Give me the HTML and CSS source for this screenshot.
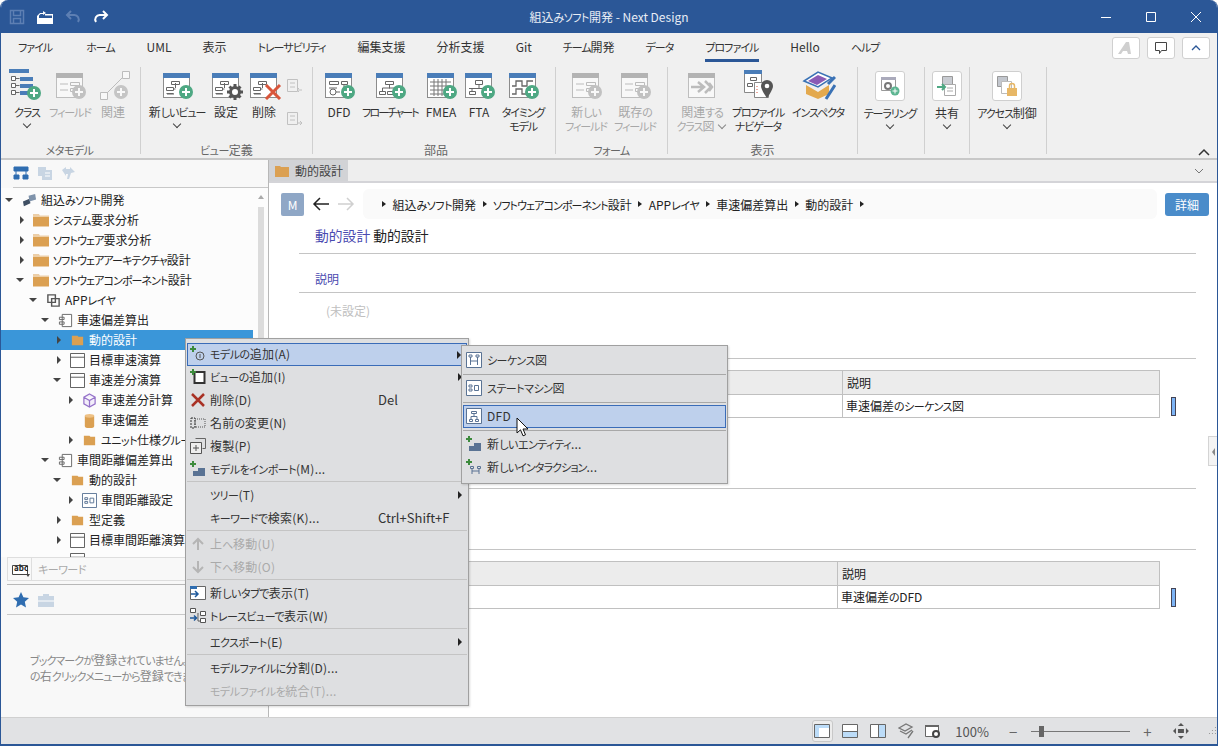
FILE: index.html
```html
<!DOCTYPE html>
<html lang="ja">
<head>
  <meta charset="UTF-8">
  <title>組込みソフト開発 - Next Design</title>
  <link rel="stylesheet" href="styles.css">
</head>
<body>
<svg class="defs" width="0" height="0">
  <defs>
    <g id="win"><rect x="4.5" y="5.5" width="26" height="24" fill="#fff" stroke="#8c8c8c"/><rect x="4" y="5" width="27" height="5" fill="#4a7db8"/></g>
    <g id="plus"><circle cx="27" cy="24" r="7" fill="#4ea883"/><path d="M27 20v8M23 24h8" stroke="#fff" stroke-width="2"/></g>
    <g id="tree"><path d="M12.5 13.5h8v3h-8zM7.5 19.500h7v3h-7zM7.500 25.500h7v-0M16.500 15v5M14.500 21h2M8 26h7" fill="none" stroke="#666"/></g>
    <g id="field"><path d="M8 16h8M8 22h8M18.500 14.500h9v3h-9zM18.500 20.500h9v3h-9z" fill="none" stroke="#888"/></g>
    <g id="dfd"><path d="M8.500 13.500h9v3h-9zM20.500 13.500h6v3h-6zM8 20h8" fill="none" stroke="#666"/><circle cx="12" cy="24" r="3" fill="#fff" stroke="#666"/><path d="M15 24h4M23 16v4" stroke="#666"/></g>
    <g id="flow"><path d="M13.500 13.500h8v3h-8zM7.500 23.500h6v3h-6zM15.500 23.500h6v3h-6zM17.500 16.500v4M10.500 23v-3h14v3" fill="none" stroke="#666"/></g>
    <g id="grid"><path d="M7 14h21M7 18h21M7 22h21M7 26h21M11 11v17M15 11v17M19 11v17M23 11v17" stroke="#777"/></g>
    <g id="fta"><path d="M14.500 12.500h7v4h-7zM8.500 23.500h6v3h-6zM18 16.500v4M8 20.500h14M11 20.500v3" fill="none" stroke="#666"/></g>
    <g id="wave"><path d="M7 18h4v-5h6v5h5v-5h6M7 26h4v-5h6v5h5v-5h6" fill="none" stroke="#666" stroke-width="1.300"/></g>
    <g id="gear"><circle cx="27" cy="24" r="4.500" fill="none" stroke="#555" stroke-width="3"/><path d="M27 16v3M27 29v3M19 24h3M32 24h3M21.500 18.500l2 2M30.500 27.500l2 2M32.500 18.500l-2 2M21.500 29.500l2-2" stroke="#555" stroke-width="3"/></g>
    <g id="cross"><path d="M20 17l14 14M34 17L20 31" stroke="#d9553a" stroke-width="3"/></g>
    <g id="fold-big"><path d="M0 1h6l1 1h9v11H0z" fill="#dba052"/><path d="M0 2.500h16" stroke="#fff"/></g>
    <g id="fold"><path d="M2 2h6l1 1h5v9H2z" fill="#dba052"/></g>
    <g id="block"><path d="M.5.500h15v15H.500zM.5 4.500h15" fill="#fff" stroke="#555"/></g>
    <g id="comp"><path d="M4.500 1.500h10v13h-10zM1.500 4.500h5v2.500h-5zM1.500 9.500h5v2.500h-5z" fill="#fff" stroke="#666"/></g>
    <g id="state"><path d="M.5.500h15v15H.500z" fill="#fff" stroke="#5a7394"/><path d="M3 5h3v2H3zM3 9h3v2H3zM8.500 5.500h4v5h-4z" fill="none" stroke="#5a7394"/></g>
    <g id="addent"><path d="M3 0v6M0 3h6" stroke="#3c8a3c" stroke-width="2"/><path d="M3 10h5V7h7v8H3z" fill="#5a7394"/></g>
  </defs>
</svg>

<div class="window">
  <header class="titlebar">
    <div class="qat">
      <svg class="qat-ic" viewBox="0 0 16 16"><path d="M1.500 1.500h13v13h-13zM4.500 1.500v5h7v-5M4.500 14.500v-5h7v5" fill="none" stroke="#5d7fb3" stroke-width="1.500"/></svg>
      <svg class="qat-ic" viewBox="0 0 16 16"><path d="M1 6l2-2h3v-2l3 2-3 2V5H3.500L2 6.500V14h13V6.500H8V5h8v10H0V7z" fill="#fff"/><path d="M1 9h14v6H1z" fill="#fff"/></svg>
      <svg class="qat-ic" viewBox="0 0 16 16"><path d="M6 2L2 6l4 4M2 6h7a4.500 4.500 0 0 1 4 7" fill="none" stroke="#5d7fb3" stroke-width="2"/></svg>
      <svg class="qat-ic" viewBox="0 0 16 16"><path d="M10 2l4 4-4 4M14 6H7a4.500 4.500 0 0 0-4 7" fill="none" stroke="#fff" stroke-width="2"/></svg>
    </div>
    <div class="title">組込<span class="k">みソフト</span>開発 - Next Design</div>
    <div class="winctl">
      <svg class="wc" viewBox="0 0 12 12"><path d="M1 6.500h10" stroke="#fff"/></svg>
      <svg class="wc" viewBox="0 0 12 12"><path d="M1.500 1.500h9v9h-9z" fill="none" stroke="#fff"/></svg>
      <svg class="wc" viewBox="0 0 12 12"><path d="M1 1l10 10M11 1L1 11" stroke="#fff"/></svg>
    </div>
  </header>

  <nav class="tabs">
    <span class="tab k">ファイル</span><span class="tab k">ホーム</span><span class="tab">UML</span><span class="tab">表示</span><span class="tab k">トレーサビリティ</span><span class="tab">編集支援</span><span class="tab">分析支援</span><span class="tab">Git</span><span class="tab"><span class="k">チーム</span>開発</span><span class="tab k">データ</span><span class="tab k active">プロファイル</span><span class="tab">Hello</span><span class="tab k">ヘルプ</span>
    <div class="tab-tools">
      <span class="tool"><svg width="18" height="14" viewBox="0 0 18 14"><path d="M1 13L9 1h3l2 12h-3l-1-3H6l-2 3z" fill="#cfcfcf"/></svg></span>
      <span class="tool"><svg width="14" height="14" viewBox="0 0 14 14"><path d="M1.500 1.500h11v8h-5l-2 3v-3h-4z" fill="none" stroke="#444"/></svg></span>
      <span class="tool"><svg width="12" height="8" viewBox="0 0 12 8"><path d="M2 6l4-4 4 4" fill="none" stroke="#2b5797" stroke-width="1.300"/></svg></span>
    </div>
  </nav>

  <section class="ribbon">
    <div class="group g1">
      <div class="btns">
        <div class="rb w44"><svg class="ri" viewBox="0 0 36 32"><path d="M0 1h20v4H0z" fill="#4a7db8"/><path d="M2.500 8.500h4v4h-4zM2.500 15.500h4v4h-4zM2.500 22.500h4v4h-4zM6.500 10.500h4M6.500 17.500h4M6.500 24.500h4" fill="#fff" stroke="#666"/><path d="M11 9h13v4H11zM11 16h13v4H11zM11 23h9v4h-9z" fill="#4a7db8"/><use href="#plus" transform="translate(-2 1)"/></svg><div class="lb k">クラス</div><div class="chev"></div></div>
        <div class="rb w42 off"><svg class="ri" viewBox="0 0 36 32"><use href="#win"/><use href="#field"/><use href="#plus"/></svg><div class="lb k">フィールド</div></div>
        <div class="rb w44 off"><svg class="ri" viewBox="0 0 36 32"><path d="M5.500 24.500h7v7h-7zM27.500 3.500h7v7h-7zM12 25L28 9" fill="#fff" stroke="#888"/><circle cx="26" cy="24" r="7" fill="#999"/><path d="M26 20v8M22 24h8" stroke="#fff" stroke-width="2"/></svg><div class="lb">関連</div></div>
      </div>
      <div class="gl k">メタモデル</div>
    </div>
    <div class="group g2">
      <div class="btns">
        <div class="rb w60"><svg class="ri" viewBox="0 0 36 32"><use href="#win"/><use href="#tree"/><use href="#plus"/></svg><div class="lb">新<span class="k">しいビュー</span></div><div class="chev"></div></div>
        <div class="rb w38"><svg class="ri" viewBox="0 0 36 32"><use href="#win"/><use href="#tree"/><use href="#gear"/></svg><div class="lb">設定</div></div>
        <div class="rb w38"><svg class="ri" viewBox="0 0 36 32"><use href="#win"/><use href="#tree"/><use href="#cross"/></svg><div class="lb">削除</div></div>
        <div class="small-col">
          <svg class="off" width="18" height="18" viewBox="0 0 18 18"><path d="M2.500 2.500h10v12h-10zM5 6h5M5 10h5M12 13H17M12 13l2-2M12 13l2 2" fill="none" stroke="#888"/></svg>
          <svg class="off" width="18" height="18" viewBox="0 0 18 18"><path d="M2.500 2.500h10v12h-10zM5 6h5M5 10h5M12 13H17M17 13l-2-2M17 13l-2 2" fill="none" stroke="#888"/></svg>
        </div>
      </div>
      <div class="gl"><span class="k">ビュー</span>定義</div>
    </div>
    <div class="group g3">
      <div class="btns">
        <div class="rb w32"><svg class="ri" viewBox="0 0 36 32"><use href="#win"/><use href="#dfd"/><use href="#plus"/></svg><div class="lb">DFD</div></div>
        <div class="rb w70"><svg class="ri" viewBox="0 0 36 32"><use href="#win"/><use href="#flow"/><use href="#plus"/></svg><div class="lb k nr">フローチャート</div></div>
        <div class="rb w32"><svg class="ri" viewBox="0 0 36 32"><use href="#win"/><use href="#grid"/><use href="#plus"/></svg><div class="lb">FMEA</div></div>
        <div class="rb w44"><svg class="ri" viewBox="0 0 36 32"><use href="#win"/><use href="#fta"/><use href="#plus"/></svg><div class="lb">FTA</div></div>
        <div class="rb w44"><svg class="ri" viewBox="0 0 36 32"><use href="#win"/><use href="#wave"/><use href="#plus"/></svg><div class="lb k">タイミング<br>モデル</div></div>
      </div>
      <div class="gl">部品</div>
    </div>
    <div class="group g4">
      <div class="btns">
        <div class="rb w48 off"><svg class="ri" viewBox="0 0 36 32"><use href="#win"/><use href="#field"/><use href="#plus"/></svg><div class="lb">新<span class="k">しい<br>フィールド</span></div></div>
        <div class="rb w50 off"><svg class="ri" viewBox="0 0 36 32"><use href="#win"/><use href="#field"/><use href="#plus"/></svg><div class="lb">既存<span class="k">の<br>フィールド</span></div></div>
      </div>
      <div class="gl k">フォーム</div>
    </div>
    <div class="group g5">
      <div class="btns">
        <div class="rb w56 off"><svg class="ri" viewBox="0 0 36 32"><use href="#win"/><path d="M7 19h12M14 14l6 5-6 5M21 13l6 6-6 6M25 15l3 4-3 4" fill="none" stroke="#888" stroke-width="2.500"/></svg><div class="lb">関連<span class="k">する<br>クラス</span>図<i class="chev-in"></i></div></div>
        <div class="rb w56"><svg class="ri" viewBox="0 0 36 32"><path d="M4.500 2.500h17v22h-17z" fill="#fff" stroke="#888"/><path d="M4 2h18v4H4z" fill="#4a7db8"/><path d="M10.500 9.500h6v3h-6zM7.500 15.500h5v3h-5z" fill="none" stroke="#666"/><path d="M14.500 14.500h14v15h-14z" fill="#fff" stroke="#888"/><path d="M17 18v9" stroke="#d9553a" stroke-dasharray="1 2"/><path d="M27 12a6 6 0 0 1 6 6c0 4-6 12-6 12s-6-8-6-12a6 6 0 0 1 6-6z" fill="#555"/><circle cx="27" cy="18" r="2.300" fill="#fff"/></svg><div class="lb k">プロファイル<br>ナビゲータ</div></div>
        <div class="rb w64"><svg class="ri" viewBox="0 0 36 32"><path d="M4 13L18 4l14 6-14 9z" fill="#fff" stroke="#3a72b5" stroke-width="1.500"/><path d="M8 13l10-6 9 4-10 6z" fill="#8a5bb5"/><path d="M6 17l12 7 11-7v9l-11 5-12-5z" fill="#e3a94e"/><path d="M28 16L35 9M26 31l9-14" stroke="#3a72b5" stroke-width="3"/></svg><div class="lb k">インスペクタ</div></div>
      </div>
      <div class="gl">表示</div>
    </div>
    <div class="group g6">
      <div class="btns">
        <div class="rb w62"><div class="boxed"><svg width="22" height="22" viewBox="0 0 22 22"><path d="M2.500 2.500h14v13h-14z" fill="#fff" stroke="#999"/><path d="M2 2h15v3H2z" fill="#aab"/><circle cx="9" cy="11" r="3" fill="none" stroke="#777" stroke-width="2"/><circle cx="16" cy="16" r="4.500" fill="#5cb591"/><path d="M16 13.500v5M13.500 16h5" stroke="#fff"/></svg></div><div class="lb k">テーラリング</div><div class="chev"></div></div>
      </div>
    </div>
    <div class="group g7">
      <div class="btns">
        <div class="rb w40"><div class="boxed"><svg width="22" height="22" viewBox="0 0 22 22"><path d="M6.500 1.500h10v9h-10z" fill="#c9ccd2" stroke="#999"/><path d="M8.500 9.500h11v11h-11zM11 13h6M11 16h6" fill="#fff" stroke="#aaa"/><path d="M1 12h8M6 9l3 3-3 3" fill="none" stroke="#4ea883" stroke-width="2"/></svg></div><div class="lb">共有</div><div class="chev"></div></div>
      </div>
    </div>
    <div class="group g8">
      <div class="btns">
        <div class="rb w72"><div class="boxed"><svg width="22" height="22" viewBox="0 0 22 22"><path d="M1.500 1.500h10v10h-10z" fill="#c3c7ce" stroke="#999"/><path d="M5.500 6.500h10v12h-10z" fill="#fff" stroke="#bbb"/><path d="M11 13h10v8H11z" fill="#e7b766"/><path d="M13.500 13v-2a2.500 2.500 0 0 1 5 0v2" fill="none" stroke="#e7b766" stroke-width="1.500"/></svg></div><div class="lb"><span class="k">アクセス</span>制御</div><div class="chev"></div></div>
      </div>
    </div>
    <svg class="rb-collapse" width="12" height="8" viewBox="0 0 12 8"><path d="M1 7l5-5 5 5" fill="none" stroke="#333" stroke-width="1.500"/></svg>
  </section>

  <main class="main">
    <aside class="side">
      <div class="side-tools">
        <svg width="16" height="14" viewBox="0 0 16 14"><path d="M1 1h14v4H1zM1 9h5v4H1zM10 9h5v4h-5zM3 5v4M13 5v4" fill="#2f6db0" stroke="#2f6db0"/></svg>
        <svg width="16" height="14" viewBox="0 0 16 14"><path d="M1 1h8v9H1zM5 4h10v10H5z" fill="#c8d5e3"/><path d="M8 7h5M8 10h5" stroke="#fff"/></svg>
        <svg width="16" height="14" viewBox="0 0 16 14"><path d="M1 4l4-3v2h4V1l5 5-4 1-2 6H6l1-5H5v2z" fill="#c8d5e3"/></svg>
      </div>
      <div class="tree-wrap">
        <div class="tree">
          <div class="row l0"><i class="tw down"></i><svg class="ti" viewBox="0 0 16 16"><path d="M1 9l7-3 1 5-7 3z" fill="#3f4f63"/><path d="M7 3l7-2 1 6-7 2z" fill="#7f93ab"/></svg><span>組込<span class="k">みソフト</span>開発</span></div>
          <div class="row l1"><i class="tw right"></i><svg class="ti big" viewBox="0 0 16 14"><use href="#fold-big"/></svg><span><span class="k">システム</span>要求分析</span></div>
          <div class="row l1"><i class="tw right"></i><svg class="ti big" viewBox="0 0 16 14"><use href="#fold-big"/></svg><span><span class="k t">ソフトウェア</span>要求分析</span></div>
          <div class="row l1"><i class="tw right"></i><svg class="ti big" viewBox="0 0 16 14"><use href="#fold-big"/></svg><span><span class="k t">ソフトウェアアーキテクチャ</span>設計</span></div>
          <div class="row l1"><i class="tw down"></i><svg class="ti big" viewBox="0 0 16 14"><use href="#fold-big"/></svg><span><span class="k t">ソフトウェアコンポーネント</span>設計</span></div>
          <div class="row l2"><i class="tw down"></i><svg class="ti" viewBox="0 0 16 16"><path d="M2 2h8v8H2z M6 6h8v8H6z" fill="none" stroke="#555" stroke-width="1.500"/></svg><span>APP<span class="k">レイヤ</span></span></div>
          <div class="row l3"><i class="tw down"></i><svg class="ti" viewBox="0 0 16 16"><use href="#comp"/></svg><span>車速偏差算出</span></div>
          <div class="row l4 sel"><i class="tw right"></i><svg class="ti" viewBox="0 0 16 14"><use href="#fold"/></svg><span>動的設計</span></div>
          <div class="row l4"><i class="tw right"></i><svg class="ti" viewBox="0 0 16 16"><use href="#block"/></svg><span>目標車速演算</span></div>
          <div class="row l4"><i class="tw down"></i><svg class="ti" viewBox="0 0 16 16"><use href="#block"/></svg><span>車速差分演算</span></div>
          <div class="row l5"><i class="tw right"></i><svg class="ti" viewBox="0 0 16 16"><path d="M8 1l6 3.500v7L8 15l-6-3.500v-7zM2 4.500L8 8l6-3.500M8 8v7" fill="#f3eefa" stroke="#9572c9" stroke-width="1.300"/></svg><span>車速差分計算</span></div>
          <div class="row l5"><i class="tw"></i><svg class="ti" viewBox="0 0 16 16"><path d="M3 3h10v11H3z" fill="#dba052"/><ellipse cx="8" cy="3" rx="5" ry="2" fill="#eec185"/><ellipse cx="8" cy="14" rx="5" ry="2" fill="#dba052"/></svg><span>車速偏差</span></div>
          <div class="row l5"><i class="tw right"></i><svg class="ti" viewBox="0 0 16 14"><use href="#fold"/></svg><span><span class="k">ユニット</span>仕様<span class="k">グループ</span></span></div>
          <div class="row l3"><i class="tw down"></i><svg class="ti" viewBox="0 0 16 16"><use href="#comp"/></svg><span>車間距離偏差算出</span></div>
          <div class="row l4"><i class="tw down"></i><svg class="ti" viewBox="0 0 16 14"><use href="#fold"/></svg><span>動的設計</span></div>
          <div class="row l5"><i class="tw right"></i><svg class="ti" viewBox="0 0 16 16"><use href="#state"/></svg><span>車間距離設定</span></div>
          <div class="row l4"><i class="tw right"></i><svg class="ti" viewBox="0 0 16 14"><use href="#fold"/></svg><span>型定義</span></div>
          <div class="row l4"><i class="tw right"></i><svg class="ti" viewBox="0 0 16 16"><use href="#block"/></svg><span>目標車間距離演算</span></div>
          <div class="row l4"><i class="tw"></i><svg class="ti" viewBox="0 0 16 16"><use href="#block"/></svg></div>
        </div>
        <div class="vscroll"><i class="vup"></i><div class="vthumb"></div></div>
      </div>
      <div class="search">
        <span class="search-ic"><svg width="18" height="12" viewBox="0 0 18 12"><path d="M.5.500h15v9H.500z" fill="#fff" stroke="#444"/><path d="M14 9h4l-2 3z" fill="#444"/></svg><b>abc</b></span>
        <span class="search-ph k">キーワード</span>
      </div>
      <div class="bm-tools">
        <svg width="16" height="16" viewBox="0 0 16 16"><path d="M8 0l2.400 5.300 5.600.6-4.200 3.800 1.200 5.800L8 12.600 3 15.500l1.200-5.800L0 5.900l5.600-.6z" fill="#2f6db0"/></svg>
        <svg width="16" height="14" viewBox="0 0 16 14"><path d="M5 3V1h6v2h5v11H0V3z" fill="#c8d5e3"/><path d="M0 8h16" stroke="#fff"/></svg>
      </div>
      <div class="bm-empty"><span class="k t">ブックマークが</span>登録<span class="k t">されていません。ツリー</span><br><span class="k t">の</span>右<span class="k t">クリックメニューから</span>登録<span class="k t">できます。</span></div>
    </aside>

    <section class="content">
      <div class="doc-tabs">
        <div class="doc-tab"><svg width="14" height="12" viewBox="0 0 14 12"><path d="M0 1h5l1 1h8v10H0z" fill="#dba052"/></svg>動的設計</div>
        <svg class="doc-chev" width="10" height="6" viewBox="0 0 10 6"><path d="M1 1l4 4 4-4" fill="none" stroke="#777"/></svg>
      </div>
      <div class="nav">
        <span class="m-badge">M</span>
        <svg class="arrow" width="18" height="14" viewBox="0 0 18 14"><path d="M17 7H2M8 1L2 7l6 6" fill="none" stroke="#222" stroke-width="1.500"/></svg>
        <svg class="arrow" width="18" height="14" viewBox="0 0 18 14"><path d="M1 7h15M10 1l6 6-6 6" fill="none" stroke="#d0d0d0" stroke-width="1.500"/></svg>
        <div class="crumbs">
          <i class="cr"></i><span>組込<span class="k">みソフト</span>開発</span><i class="cr"></i><span><span class="k t">ソフトウェアコンポーネント</span>設計</span><i class="cr"></i><span>APP<span class="k">レイヤ</span></span><i class="cr"></i><span>車速偏差算出</span><i class="cr"></i><span>動的設計</span><i class="cr"></i>
        </div>
        <span class="detail-btn">詳細</span>
      </div>
      <div class="sec sec-title"><span class="kw">動的設計</span> 動的設計</div>
      <div class="sec sec-label"><span class="kw">説明</span></div>
      <div class="sec sec-desc">(未設定)</div>
      <div class="sec sec-t1">
        <div class="tbl-row">
          <table class="tbl t1">
            <tr><th class="c1">名前</th><th>説明</th></tr>
            <tr><td class="k">シーケンス図</td><td>車速偏差<span class="k">のシーケンス</span>図</td></tr>
          </table>
          <i class="mark"></i>
        </div>
      </div>
      <div class="sec sec-gap"></div>
      <div class="sec-t2">
        <div class="tbl-row">
          <table class="tbl t2">
            <tr><th class="c2">名前</th><th>説明</th></tr>
            <tr><td>DFD</td><td>車速偏差<span class="k">の</span>DFD</td></tr>
          </table>
          <i class="mark"></i>
        </div>
      </div>
      <div class="handle"><i></i></div>
    </section>
  </main>

  <footer class="status">
    <span class="st active"><svg width="16" height="14" viewBox="0 0 16 14"><path d="M.5.500h15v13H.500z" fill="#fff" stroke="#666"/><path d="M1 1h14v3H1zM1 4h4v9H1z" fill="#bcdcf8"/></svg></span>
    <span class="st"><svg width="16" height="14" viewBox="0 0 16 14"><path d="M.5.500h15v13H.500zM.5 7.500h15" fill="#fff" stroke="#666"/><path d="M1 8h14v5H1z" fill="#bcdcf8"/></svg></span>
    <span class="st"><svg width="16" height="14" viewBox="0 0 16 14"><path d="M.5.500h15v13H.500zM8.500.500v13" fill="#fff" stroke="#666"/><path d="M9 1h6v12H9z" fill="#bcdcf8"/></svg></span>
    <span class="st"><svg width="16" height="16" viewBox="0 0 16 16"><path d="M1 5l7-4 6 3-7 4zM2 8l6 3 6-4M10 15l5-7" fill="none" stroke="#777" stroke-width="1.300"/></svg></span>
    <span class="st"><svg width="16" height="14" viewBox="0 0 16 14"><path d="M.5 1.500h13v11H.500z" fill="#fff" stroke="#666"/><path d="M0 1h14v2H0z" fill="#666"/><circle cx="11" cy="10" r="3" fill="#fff" stroke="#444" stroke-width="2"/></svg></span>
    <span class="zoom">100%</span>
    <span class="zm">−</span>
    <div class="slider"><i></i></div>
    <span class="zm plus">+</span>
    <svg class="fit" width="16" height="16" viewBox="0 0 16 16"><path d="M8 0l3 3H5zM8 16l-3-3h6zM0 8l3-3v6zM16 8l-3 3V5zM5 6h6v4H5z" fill="#555"/></svg>
    <svg class="grip" width="10" height="10" viewBox="0 0 10 10"><path d="M8 1h1v1H8zM5 4h1v1H5zM8 4h1v1H8zM2 7h1v1H2zM5 7h1v1H5zM8 7h1v1H8z" fill="#999"/></svg>
  </footer>

  <div class="menu ctx">
    <div class="mi hi"><svg class="mic" viewBox="0 0 16 16"><path d="M3 0v6M0 3h6" stroke="#3c8a3c" stroke-width="2"/><circle cx="10" cy="10" r="4" fill="none" stroke="#555"/><path d="M10 8v4" stroke="#555"/></svg><span class="k">モデルの</span>追加(A)<i class="sub"></i></div>
    <div class="mi"><svg class="mic" viewBox="0 0 16 16"><path d="M4.500 3h10v11h-10z" fill="#fff" stroke="#333" stroke-width="2"/><path d="M3 0v6M0 3h6" stroke="#3c8a3c" stroke-width="2"/></svg><span class="k">ビューの</span>追加(I)<i class="sub"></i></div>
    <div class="mi"><svg class="mic" viewBox="0 0 16 16"><path d="M2 2l12 12M14 2L2 14" stroke="#a93226" stroke-width="2.500"/></svg>削除(D)<span class="key">Del</span></div>
    <div class="mi"><svg class="mic" viewBox="0 0 16 16"><path d="M1 3h4v10H1z" fill="none" stroke="#333" stroke-dasharray="2 1"/><path d="M5 4h10v8H5z" fill="none" stroke="#555" stroke-dasharray="1 1"/></svg>名前<span class="k">の</span>変更(N)</div>
    <div class="mi"><svg class="mic" viewBox="0 0 16 16"><path d="M5.500.500h10v10h-3" fill="none" stroke="#666"/><path d="M.5 4.500h11v11H.500zM6 7v6M3 10h6" fill="#eee" stroke="#555"/></svg>複製(P)</div>
    <div class="mi"><svg class="mic" viewBox="0 0 16 16"><use href="#addent"/></svg><span class="k">モデルをインポート</span>(M)...</div>
    <div class="msep"></div>
    <div class="mi"><span class="k">ツリー</span>(T)<i class="sub"></i></div>
    <div class="mi"><span class="k">キーワードで</span>検索(K)...<span class="key">Ctrl+Shift+F</span></div>
    <div class="msep"></div>
    <div class="mi dis"><svg class="mic" viewBox="0 0 16 16"><path d="M8 14V3M3 8l5-5 5 5" fill="none" stroke="#b5b5b5" stroke-width="2"/></svg>上<span class="k">へ</span>移動(U)</div>
    <div class="mi dis"><svg class="mic" viewBox="0 0 16 16"><path d="M8 2v11M3 8l5 5 5-5" fill="none" stroke="#b5b5b5" stroke-width="2"/></svg>下<span class="k">へ</span>移動(O)</div>
    <div class="msep"></div>
    <div class="mi"><svg class="mic" viewBox="0 0 16 16"><path d="M.5 1.500h15v13H.500z" fill="#fff" stroke="#666"/><path d="M0 1h7v3H0z" fill="#2f6db0"/><path d="M1 9h7M5 6l3 3-3 3" fill="none" stroke="#1f5a9c" stroke-width="1.500"/></svg>新<span class="k">しいタブで</span>表示(T)</div>
    <div class="mi"><svg class="mic" viewBox="0 0 16 16"><path d="M.5.500h5v4h-5zM10.500 3.500h5v4h-5zM10.500 10.500h5v4h-5zM8 5v8h2" fill="#fff" stroke="#555"/><path d="M0 10h6M4 7.500L6.500 10 4 12.500" fill="none" stroke="#1f5a9c" stroke-width="1.500"/></svg><span class="k">トレースビューで</span>表示(W)</div>
    <div class="msep"></div>
    <div class="mi"><span class="k">エクスポート</span>(E)<i class="sub"></i></div>
    <div class="msep"></div>
    <div class="mi"><span class="k">モデルファイルに</span>分割(D)...</div>
    <div class="mi dis"><span class="k">モデルファイルを</span>統合(T)...</div>
  </div>

  <div class="menu submenu">
    <div class="mi"><svg class="mic" viewBox="0 0 16 16"><path d="M.5.500h15v15H.500z" fill="#fff" stroke="#5a7394"/><path d="M3 3h3v2H3zM10 3h3v2h-3zM4.500 5v8M11.500 5v8M4.500 9h7" fill="none" stroke="#5a7394"/></svg><span class="k">シーケンス</span>図</div>
    <div class="msep"></div>
    <div class="mi"><svg class="mic" viewBox="0 0 16 16"><use href="#state"/></svg><span class="k">ステートマシン</span>図</div>
    <div class="msep"></div>
    <div class="mi hi"><svg class="mic" viewBox="0 0 16 16"><path d="M.5.500h15v15H.500z" fill="#fff" stroke="#5a7394"/><path d="M5.500 3.500h5v2h-5zM3.500 11.500h3v2h-3zM9.500 11.500h3v2h-3zM8 5.500v3M5 11V8.500h6V11" fill="none" stroke="#5a7394"/></svg>DFD</div>
    <div class="msep"></div>
    <div class="mi"><svg class="mic" viewBox="0 0 16 16"><use href="#addent"/></svg>新<span class="k">しいエンティティ</span>...</div>
    <div class="mi"><svg class="mic" viewBox="0 0 16 16"><path d="M3 0v6M0 3h6" stroke="#3c8a3c" stroke-width="2"/><path d="M4.500 7.500h3v2h-3zM11.500 7.500h3v2h-3zM6 9.500V15M13 9.500V15M6 12h7" fill="none" stroke="#5a7394"/></svg>新<span class="k t">しいインタラクション</span>...</div>
  </div>

  <svg class="cursor" width="15" height="21" viewBox="0 0 15 21"><path d="M1 1v15l3.500-3.200 2.500 6 2.500-1-2.500-5.800H12z" fill="#fff" stroke="#111"/></svg>
</div>
</body>
</html>
```

FILE: styles.css
```css
* {
  box-sizing: border-box;
}
html, body {
  margin: 0;
  padding: 0;
  background: #fff;
}
body {
  font-family: "Noto Sans CJK JP", "Noto Sans", sans-serif;
  font-feature-settings: "palt";
  font-size: 12px;
  color: #222;
  overflow: hidden;
}
/* kana runs sit tighter than the kanji around them */
.k {
  font-size: 11px;
  letter-spacing: -.5px;
}
.k.t {
  letter-spacing: -.9px;
}
.defs {
  position: absolute;
}
.window {
  position: relative;
  width: 1218px;
  height: 746px;
  display: flex;
  flex-direction: column;
  border: 1px solid #2b5797;
  border-top: none;
  border-bottom-width: 2px;
  border-radius: 8px 8px 0 0;
  overflow: hidden;
  background: #fff;
}

/* title bar */
.titlebar {
  height: 33px;
  flex: none;
  background: #2b5797;
  display: grid;
  grid-template-columns: 1fr auto 1fr;
  align-items: center;
  color: #fff;
}
.title {
  font-size: 12px;
  color: #e8edf5;
}
.qat {
  display: flex;
  gap: 12px;
  padding-left: 8px;
}
.qat-ic {
  width: 16px;
  height: 16px;
}
.winctl {
  display: flex;
  justify-content: flex-end;
  gap: 33px;
  padding-right: 15px;
}
.wc {
  width: 12px;
  height: 12px;
}

/* ribbon tabs */
.tabs {
  height: 31px;
  flex: none;
  background: #f0f0f0;
  display: flex;
  align-items: flex-start;
  padding-left: 17px;
  gap: 31px;
}
.tab {
  line-height: 18px;
  padding-top: 5px;
  height: 29px;
  color: #333;
  white-space: nowrap;
}
.tab.k,
.tab .k {
  letter-spacing: -1px;
}
.tab.k {
  padding-right: 1px;
}
.tab:first-child {
  margin-right: 2px;
}
.tab.active {
  border-bottom: 3px solid #2b5797;
}
.tab-tools {
  margin-left: auto;
  display: flex;
  gap: 7px;
  padding: 4px 7px 0 0;
}
.tool {
  width: 28px;
  height: 22px;
  background: #fff;
  border: 1px solid #d0d0d0;
  border-radius: 3px;
  display: flex;
  align-items: center;
  justify-content: center;
}

/* ribbon */
.ribbon {
  position: relative;
  height: 96px;
  flex: none;
  background: #f0f0f0;
  border-bottom: 2px solid #c8c8c8;
  display: flex;
  align-items: flex-start;
}
.group {
  height: 87px;
  margin-top: 3px;
  border-right: 1px solid #d0d0d0;
  display: flex;
  flex-direction: column;
}
.g1 { width: 140px; padding-left: 4px; }
.g2 { width: 172px; padding-left: 6px; }
.g3 { width: 243px; padding-left: 10px; }
.g4 { width: 112px; padding-left: 6px; }
.g5 { width: 190px; padding-left: 6px; }
.g6 { width: 67px; padding-left: 1px; }
.g7 { width: 45px; padding-left: 2px; }
.g8 { width: 77px; padding-left: 1px; }
.btns {
  display: flex;
  height: 76px;
  flex: none;
}
.rb {
  display: flex;
  flex-direction: column;
  align-items: center;
  flex: none;
}
.w32 { width: 32px; }
.w38 { width: 38px; }
.w40 { width: 40px; }
.w42 { width: 42px; }
.w44 { width: 44px; }
.w48 { width: 48px; }
.w50 { width: 50px; }
.w56 { width: 56px; }
.w60 { width: 60px; }
.w62 { width: 62px; }
.w64 { width: 64px; }
.w70 { width: 70px; }
.w72 { width: 72px; }
.ri {
  width: 36px;
  height: 32px;
  margin-top: 1px;
  flex: none;
}
.lb {
  margin-top: 5px;
  line-height: 14px;
  text-align: center;
  white-space: nowrap;
  color: #333;
}
.lb.k,
.lb .k {
  letter-spacing: -1.1px;
}
.lb.k.nr {
  letter-spacing: -1.900px;
}
.boxed {
  width: 30px;
  height: 30px;
  margin-top: 4px;
  flex: none;
  background: #fff;
  border: 1px solid #cfcfcf;
  border-radius: 3px;
  display: flex;
  align-items: center;
  justify-content: center;
}
.chev {
  width: 6px;
  height: 6px;
  margin-top: 2px;
  border-right: 1px solid #444;
  border-bottom: 1px solid #444;
  transform: rotate(45deg);
}
.chev-in {
  display: inline-block;
  width: 6px;
  height: 6px;
  margin: 0 2px 3px 5px;
  border-right: 1px solid #888;
  border-bottom: 1px solid #888;
  transform: rotate(45deg);
}
.off {
  filter: grayscale(1) opacity(.45);
}
.rb.off .ri {
  filter: grayscale(1) opacity(.5);
}
.rb.off {
  filter: none;
}
.rb.off .lb {
  color: #a8a8a8;
}
.small-col {
  margin-left: 2px;
  padding-top: 10px;
  display: flex;
  flex-direction: column;
  gap: 15px;
}
.gl {
  flex: none;
  text-align: center;
  line-height: 14px;
  color: #666;
  padding-right: 6px;
}
.rb-collapse {
  position: absolute;
  right: 7px;
  bottom: 2px;
}

/* main area */
.main {
  flex: 1;
  min-height: 0;
  display: flex;
}
.side {
  width: 268px;
  flex: none;
  background: #f8f8f8;
  border-right: 1px solid #b8b8b8;
  display: flex;
  flex-direction: column;
}
.side-tools {
  height: 28px;
  flex: none;
  margin-left: 12px;
  padding-bottom: 2px;
  display: flex;
  align-items: center;
  gap: 8px;
  border-bottom: 1px solid #c8c8c8;
  background: #f8f8f8;
}
.tree-wrap {
  height: 369px;
  flex: none;
  display: flex;
  background: #fcfcfc;
  overflow: hidden;
  padding-top: 2px;
}
.tree {
  width: 252px;
  flex: none;
}
.row {
  height: 20px;
  display: flex;
  align-items: center;
  white-space: nowrap;
  line-height: 20px;
}
.row > span {
  margin-left: 4px;
}
.row.sel {
  background: #3a96d9;
  color: #fff;
}
.l0 { padding-left: 0; }
.l1 { padding-left: 11px; }
.l2 { padding-left: 24px; }
.l3 { padding-left: 36px; }
.l4 { padding-left: 48px; }
.l5 { padding-left: 60px; }
.tw {
  width: 21px;
  height: 12px;
  flex: none;
  position: relative;
}
.tw.right::before,
.tw.down::before {
  content: "";
  position: absolute;
  border-style: solid;
  border-color: transparent;
}
.tw.right::before {
  left: 8px;
  top: 2px;
  border-width: 4px 0 4px 4px;
  border-left-color: #444;
}
.tw.down::before {
  left: 4px;
  top: 4px;
  border-width: 4px 4px 0;
  border-top-color: #444;
}
.ti {
  width: 15px;
  height: 15px;
  flex: none;
}
.ti.big {
  width: 16px;
  height: 15px;
}
.vscroll {
  position: relative;
  width: 15px;
  flex: none;
  padding: 17px 4px 0 5px;
}
.vup {
  position: absolute;
  left: 5px;
  top: 5px;
  border-style: solid;
  border-color: transparent;
  border-width: 0 3px 4px;
  border-bottom-color: #aaa;
}
.vthumb {
  height: 100%;
  background: #dcdcdc;
}
.search {
  height: 24px;
  flex: none;
  margin-left: 6px;
  border: 1px solid #dedede;
  display: flex;
  align-items: center;
  background: #f8f8f8;
}
.search-ic {
  position: relative;
  width: 24px;
  height: 22px;
  border-right: 1px solid #dedede;
  padding: 5px 0 0 4px;
}
.search-ic b {
  position: absolute;
  left: 6px;
  top: 4px;
  font-size: 8px;
  line-height: 12px;
  font-weight: 700;
}
.search-ph {
  margin-left: 6px;
  color: #aaa;
}
.bm-tools {
  height: 31px;
  flex: none;
  margin-left: 6px;
  margin-top: 3px;
  padding-left: 6px;
  display: flex;
  align-items: center;
  gap: 9px;
  border-top: 1px solid #b8b8b8;
  border-bottom: 1px solid #c8c8c8;
}
.bm-empty {
  margin: 37px 0 0 29px;
  line-height: 15px;
  white-space: nowrap;
  color: #888;
  overflow: hidden;
}

/* right pane */
.content {
  position: relative;
  flex: 1;
  min-width: 0;
  background: #fff;
}
.doc-tabs {
  height: 23px;
  display: flex;
  background: #eee;
  border-bottom: 2px solid #d4d4d8;
  justify-content: space-between;
  align-items: center;
}
.doc-tab {
  width: 79px;
  height: 21px;
  background: #d2d3d6;
  display: flex;
  align-items: center;
  gap: 6px;
  padding-left: 6px;
  color: #444;
}
.doc-chev {
  margin-right: 13px;
}
.nav {
  height: 36px;
  display: flex;
  align-items: center;
  padding-left: 12px;
  padding-top: 6px;
}
.m-badge {
  width: 23px;
  height: 23px;
  background: #8fa7c6;
  color: #fff;
  border-radius: 2px;
  text-align: center;
  line-height: 23px;
}
.arrow {
  margin-left: 8px;
}
.arrow + .arrow {
  margin-left: 7px;
}
.crumbs {
  width: 794px;
  height: 30px;
  margin-left: 8px;
  background: #fafafa;
  border-radius: 6px;
  display: flex;
  align-items: center;
  padding-left: 19px;
  gap: 6.500px;
  white-space: nowrap;
}
.cr {
  border-style: solid;
  border-color: transparent;
  border-width: 3px 0 3px 4px;
  border-left-color: #222;
}
.detail-btn {
  width: 44px;
  height: 23px;
  margin-left: 8px;
  background: #4a8cca;
  color: #fff;
  border-radius: 3px;
  text-align: center;
  line-height: 23px;
}
.sec {
  width: 897px;
  margin-left: 30px;
  border-bottom: 1px solid #c4c4c4;
}
.kw {
  color: #4a4ab0;
}
.sec-title {
  height: 35px;
  padding: 7px 0 0 16px;
  font-size: 13.800px;
  line-height: 18px;
}
.sec-label {
  height: 39px;
  padding: 16px 0 0 16px;
  line-height: 18px;
}
.sec-desc {
  height: 66px;
  padding: 9px 0 0 27px;
  line-height: 18px;
  color: #c0c0c0;
}
.sec-t1 {
  height: 130px;
  padding: 11px 0 0 16px;
}
.sec-gap {
  height: 61px;
}
.sec-t2 {
  margin-left: 46px;
  padding-top: 11px;
}
.tbl-row {
  display: flex;
  align-items: flex-end;
  gap: 11px;
}
.tbl {
  width: 845px;
  border-collapse: collapse;
  table-layout: fixed;
}
.tbl th,
.tbl td {
  border: 1px solid #c0c0c0;
  height: 23px;
  padding: 0 3px;
  font-weight: 400;
  text-align: left;
  line-height: 18px;
}
.tbl th {
  height: 24px;
  background: #ececec;
  padding-left: 4px;
}
.c1 { width: 527px; }
.c2 { width: 522px; }
.mark {
  width: 5px;
  height: 19px;
  margin-bottom: 2px;
  background: #7db4f5;
  border: 1px solid #445;
}
.handle {
  position: absolute;
  right: 0;
  top: 276px;
  width: 9px;
  height: 30px;
  background: #f4f4f4;
  border: 1px solid #d4d4d4;
  border-right: none;
}
.handle i {
  position: absolute;
  left: 3px;
  top: 11px;
  border-style: solid;
  border-color: transparent;
  border-width: 4px 3px 4px 0;
  border-right-color: #888;
}

/* status bar */
.status {
  height: 27px;
  flex: none;
  background: #e1e2e4;
  border-top: 1px solid #d0d0d0;
  display: flex;
  align-items: center;
  padding-left: 811px;
  color: #555;
}
.st {
  width: 28px;
  height: 22px;
  display: flex;
  align-items: center;
  justify-content: center;
}
.st.active {
  width: 21px;
  margin-right: 3px;
  border: 1px solid #c8c8c8;
  border-radius: 3px;
  background: #ececec;
}
.zoom {
  margin-left: 8px;
  width: 50px;
  font-size: 13px;
}
.zm {
  width: 18px;
  font-size: 15px;
  color: #666;
  margin-left: 4px;
}
.slider {
  position: relative;
  width: 100px;
  height: 1px;
  margin-left: 4px;
  background: #777;
}
.slider i {
  position: absolute;
  left: 8px;
  top: -5px;
  width: 5px;
  height: 11px;
  background: #666;
}
.zm.plus {
  margin-left: 13px;
}
.fit {
  margin-left: 12px;
}
.grip {
  margin-left: 18px;
}

/* popup menus */
.menu {
  position: absolute;
  background: #dedfe1;
  border: 1px solid #a0a0a0;
  box-shadow: 1px 1px 2px rgba(0,0,0,0.15);
}
.ctx {
  left: 184px;
  top: 338px;
  width: 284px;
  height: 368px;
  padding: 4px 1px;
}
.submenu {
  left: 460px;
  top: 345px;
  width: 267px;
  height: 139px;
  padding: 3px 1px;
}
.mi {
  position: relative;
  height: 23px;
  line-height: 22px;
  padding-left: 23px;
  white-space: nowrap;
  letter-spacing: .25px;
  color: #333;
}
.mi.hi {
  background: #bed0ec;
  border: 1px solid #3a6cb8;
  line-height: 20px;
  padding-left: 22px;
}
.submenu .mi {
  padding-left: 24px;
}
.submenu .mi.hi {
  padding-left: 23px;
}
.mi.dis {
  color: #aaa;
}
.mic {
  position: absolute;
  left: 3px;
  top: 3px;
  width: 16px;
  height: 16px;
}
.mi.hi .mic {
  left: 2px;
  top: 2px;
}
.key {
  position: absolute;
  left: 191px;
  top: 0;
  font-size: 13px;
  letter-spacing: 0;
}
.sub {
  position: absolute;
  right: 5px;
  top: 7px;
  border-style: solid;
  border-color: transparent;
  border-width: 4px 0 4px 4px;
  border-left-color: #222;
}
.msep {
  height: 1px;
  margin: 0 0 2px;
  background: #c4c4c4;
}
.submenu .msep {
  margin: 2px 0;
  background: #a8a8a8;
}
.cursor {
  position: absolute;
  left: 515px;
  top: 417px;
}
```
